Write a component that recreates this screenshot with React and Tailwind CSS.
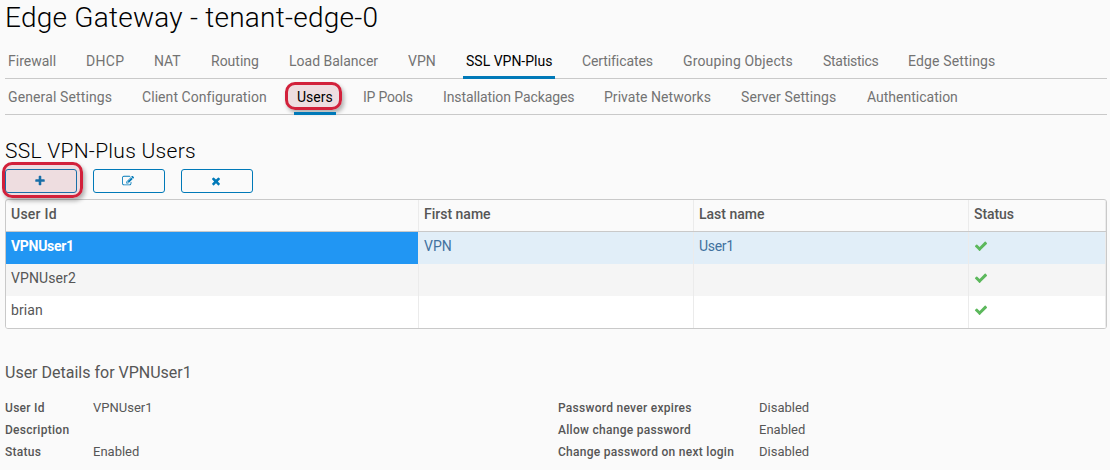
import React from 'react';

const ICONS = {
  plus: 'M1600 736v192q0 40-28 68t-68 28h-416v416q0 40-28 68t-68 28h-192q-40 0-68-28t-28-68v-416h-416q-40 0-68-28t-28-68v-192q0-40 28-68t68-28h416v-416q0-40 28-68t68-28h192q40 0 68 28t28 68v416h416q40 0 68 28t28 68z',
  edit: 'M888 1184l116-116-152-152-116 116v56h96v96h56zm440-720q-16-16-33 1l-350 350q-17 17-1 33t33-1l350-350q17-17 1-33zm80 594v190q0 119-84.5 203.5t-203.5 84.5h-832q-119 0-203.5-84.5t-84.5-203.5v-832q0-119 84.5-203.5t203.5-84.5h832q63 0 117 25 15 7 18 23 3 17-9 29l-49 49q-14 14-32 8-23-6-45-6h-832q-66 0-113 47t-47 113v832q0 66 47 113t113 47h832q66 0 113-47t47-113v-126q0-13 9-22l64-64q15-15 35-7t20 29zm-96-738l288 288-672 672h-288v-288zm444 132l-92 92-288-288 92-92q28-28 68-28t68 28l152 152q28 28 28 68t-28 68z',
  times: 'M1490 1322q0 40-28 68l-136 136q-28 28-68 28t-68-28l-294-294-294 294q-28 28-68 28t-68-28l-136-136q-28-28-28-68t28-68l294-294-294-294q-28-28-28-68t28-68l136-136q28-28 68-28t68 28l294 294 294-294q28-28 68-28t68 28l136 136q28 28 28 68t-28 68l-294 294 294 294q28 28 28 68z',
  check: 'M1671 566q0 40-28 68l-724 724-136 136q-28 28-68 28t-68-28l-136-136-362-362q-28-28-28-68t28-68l136-136q28-28 68-28t68 28l294 295 656-657q28-28 68-28t68 28l136 136q28 28 28 68z',
};

function Icon({ name, className }) {
  return (
    <svg viewBox="0 0 1792 1792" className={`fill-current ${className}`}>
      <path d={ICONS[name]} />
    </svg>
  );
}

const MAIN_TABS = [
  { label: 'Firewall', size: 'w-[54px]' },
  { label: 'DHCP', size: 'w-11 tracking-[0.3px]' },
  { label: 'NAT', size: 'w-[33px]' },
  { label: 'Routing', size: 'w-[54px]' },
  { label: 'Load Balancer', size: 'w-[95px]' },
  { label: 'VPN', size: 'w-[34px]' },
  { label: 'SSL VPN-Plus', size: 'w-[92px]', active: true },
  { label: 'Certificates', size: 'w-[77px] tracking-[-0.1px]' },
  { label: 'Grouping Objects', size: 'w-[116px] tracking-[0.15px]' },
  { label: 'Statistics', size: 'w-[61px] tracking-[-0.28px]' },
  { label: 'Edge Settings', size: 'w-[93px] tracking-[0.14px]' },
];

const SUB_TABS = [
  { label: 'General Settings', size: 'w-[110px] tracking-[0.12px]' },
  { label: 'Client Configuration', size: 'w-[131px] tracking-[0.06px]' },
  { label: 'Users', size: 'w-[42px]', active: true, marked: true },
  { label: 'IP Pools', size: 'w-14 tracking-[-0.22px]' },
  { label: 'Installation Packages', size: 'w-[137px] tracking-[-0.1px]' },
  { label: 'Private Networks', size: 'w-[113px] tracking-[0.04px]' },
  { label: 'Server Settings', size: 'w-[102px] tracking-[0.08px]' },
  { label: 'Authentication', size: 'w-24' },
];

const MARK =
  'pointer-events-none absolute border-[3px] border-[#d2213b] bg-[#aa3346]/14 shadow-[2px_3px_4px_rgba(0,0,0,0.3)]';

function Tabs({ items }) {
  return (
    <nav className="flex h-9 gap-6 border-b border-[#c9c9c9]">
      {items.map((t) => (
        <div
          key={t.label}
          className={`relative h-9 shrink-0 border-b-[3px] px-[3px] text-sm leading-[36px] whitespace-nowrap ${t.size} ${
            t.active ? 'border-[#0079b8] text-black' : 'border-transparent text-[#737373]'
          }`}
        >
          {t.label}
          {t.marked && <span className={`${MARK} top-[3px] -left-[9px] -z-10 h-7 w-[57px] rounded-[10px]`} />}
        </div>
      ))}
    </nav>
  );
}

function ToolButton({ icon, size, marked }) {
  return (
    <button className="relative flex h-6 w-[72px] items-center justify-center rounded-[3px] border border-[#0079b8] text-[#0079b8]">
      <Icon name={icon} className={size} />
      {marked && <span className={`${MARK} -top-2 -left-1 h-9 w-[81px] rounded-[10px]`} />}
    </button>
  );
}

const COLS = 'grid grid-cols-[413px_275px_275px_1fr]';

const USERS = [
  { id: 'VPNUser1', first: 'VPN', last: 'User1', selected: true },
  { id: 'VPNUser2', first: '', last: '', row: 'bg-[#f5f5f5]' },
  { id: 'brian', first: '', last: '', row: 'bg-white' },
];

const CELL = 'border-r border-[#ebebeb] px-[5px]';

function UserTable() {
  return (
    <div className="h-[130px] w-[1102px] overflow-hidden rounded-[3px] border border-[#c9c9c9] text-sm text-[#565656]">
      <div className={`${COLS} h-8 border-b border-[#c9c9c9] leading-[29px] font-medium`}>
        <div className={`${CELL} tracking-[0.25px]`}>User Id</div>
        <div className={CELL}>First name</div>
        <div className={CELL}>Last name</div>
        <div className={`${CELL} tracking-[-0.1px]`}>Status</div>
      </div>
      {USERS.map((u) => (
        <div
          key={u.id}
          className={`${COLS} h-8 leading-[29px] ${u.selected ? 'bg-[#e1eef8] text-[#41729f]' : u.row}`}
        >
          {u.selected ? (
            <div className="border-r border-[#ebebeb] bg-[#2196f3] bg-clip-padding px-[5px] font-bold tracking-[-0.3px] text-white">
              {u.id}
            </div>
          ) : (
            <div className={`${CELL} tracking-[0.1px]`}>{u.id}</div>
          )}
          <div className={CELL}>{u.first}</div>
          <div className={`${CELL} tracking-[-0.3px]`}>{u.last}</div>
          <div className={`${CELL} pt-[7px]`}>
            <Icon name="check" className="h-[14px] w-[14px] text-[#5cb85c]" />
          </div>
        </div>
      ))}
    </div>
  );
}

function Detail({ label, value, width }) {
  return (
    <div className="flex h-[22px] items-baseline leading-[22px]">
      <dt className={`${width} text-xs font-medium tracking-[0.28px]`}>{label}</dt>
      <dd className="text-[13px]">{value || '\u00a0'}</dd>
    </div>
  );
}

export default function App() {
  return (
    <div className="isolate h-[470px] w-full overflow-hidden bg-[#fafafa] pl-[5px] font-[Roboto,sans-serif]">
      <div className="w-[1102px]">
        <h1 className="h-[43px] text-[28px] leading-[36px] font-light tracking-[0.24px] text-black">
          Edge Gateway - tenant-edge-0
        </h1>
        <Tabs items={MAIN_TABS} />
        <Tabs items={SUB_TABS} />
        <h2 className="mt-[23px] h-[31px] text-[21px] leading-[26px] font-light tracking-[0.28px] text-black">
          SSL VPN-Plus Users
        </h2>
        <div className="mb-1.5 flex gap-4">
          <ToolButton icon="plus" size="mr-[2px] h-3 w-3" marked />
          <ToolButton icon="edit" size="mr-[2px] h-3 w-3" />
          <ToolButton icon="times" size="mr-[2px] h-3 w-3" />
        </div>
        <UserTable />
        <h3 className="mt-[33px] mb-[13px] text-base leading-[22px] text-[#565656]">User Details for VPNUser1</h3>
        <div className="flex text-[#565656]">
          <dl className="w-[553px]">
            <Detail label="User Id" value="VPNUser1" width="w-[88px]" />
            <Detail label="Description" value="" width="w-[88px]" />
            <Detail label="Status" value="Enabled" width="w-[88px]" />
          </dl>
          <dl>
            <Detail label="Password never expires" value="Disabled" width="w-[201px]" />
            <Detail label="Allow change password" value="Enabled" width="w-[201px]" />
            <Detail label="Change password on next login" value="Disabled" width="w-[201px]" />
          </dl>
        </div>
      </div>
    </div>
  );
}
